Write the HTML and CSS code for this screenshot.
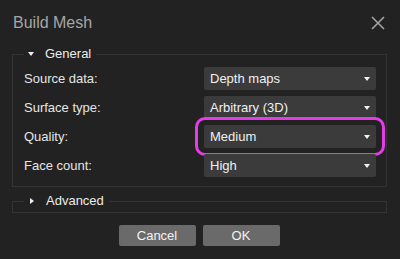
FILE: index.html
```html
<!DOCTYPE html>
<html lang="en">
<head>
    <meta charset="UTF-8">
    <meta name="viewport" content="width=device-width, initial-scale=1.0">
    <title>Build Mesh</title>
    <link rel="stylesheet" href="styles.css">
</head>
<body>
    <div class="dialog">
        <div class="title-bar">
            <span class="title">Build Mesh</span>
            <svg class="close" width="14" height="14" viewBox="0 0 14 14">
                <path d="M1 1 L13 13 M13 1 L1 13" stroke="#a3a3a3" stroke-width="1.6" fill="none"/>
            </svg>
        </div>

        <fieldset class="group">
            <legend><span class="tri-down"></span>General</legend>
            <div class="rows">
                <label>Source data:</label>
                <div class="select"><span>Depth maps</span><span class="arrow"></span></div>

                <label>Surface type:</label>
                <div class="select"><span>Arbitrary (3D)</span><span class="arrow"></span></div>

                <label>Quality:</label>
                <div class="select highlight"><span>Medium</span><span class="arrow"></span></div>

                <label>Face count:</label>
                <div class="select"><span>High</span><span class="arrow"></span></div>
            </div>
        </fieldset>

        <fieldset class="group collapsed">
            <legend><span class="tri-right"></span>Advanced</legend>
        </fieldset>

        <div class="buttons">
            <button type="button">Cancel</button>
            <button type="button">OK</button>
        </div>
    </div>
</body>
</html>
```

FILE: styles.css
```css
body { margin: 0; background: #222222; font-family: "Liberation Sans", Arial, sans-serif; color: #e6e6e6; }
.dialog { width: 400px; height: 259px; box-sizing: border-box; padding: 0 13px 0 12px; }
.title-bar { display: flex; justify-content: space-between; align-items: center; height: 46px; padding-left: 1px; padding-right: 2px; }
.title { font-size: 16px; color: #a6a6a6; }
.group { margin: 0; border: 1px solid #343434; padding: 5px 10px 9px 11px; }
.group legend { font-size: 13px; padding: 0 5px 0 4px; margin-left: 0; display: flex; align-items: center; line-height: 16px; color: #ececec; }
.tri-down { width: 0; height: 0; border-left: 3.5px solid transparent; border-right: 3.5px solid transparent; border-top: 4px solid #f0f0f0; margin-right: 11px; }
.tri-right { width: 0; height: 0; border-top: 3.5px solid transparent; border-bottom: 3.5px solid transparent; border-left: 4px solid #f0f0f0; margin-left: 2px; margin-right: 12px; }
.rows { display: grid; grid-template-columns: 1fr 172px; row-gap: 6px; align-items: center; }
.rows label { font-size: 13px; }
.select { position: relative; height: 23px; background: #3b3b3b; border-radius: 2px; display: flex; align-items: center; justify-content: space-between; padding: 0 6px; font-size: 13px; color: #f0f0f0; box-sizing: border-box; }
.arrow { width: 0; height: 0; border-left: 3.5px solid transparent; border-right: 3.5px solid transparent; border-top: 4px solid #f2f2f2; }
.highlight::after { content: ""; position: absolute; left: -9px; right: -9px; top: -8px; bottom: -8px; border: 3px solid #e33de6; border-radius: 10px; }
.collapsed { margin-top: 6px; padding: 0 10px 3px 11px; }
.buttons { display: flex; justify-content: center; gap: 7px; margin-top: 12px; padding-right: 1px; }
.buttons button { width: 77px; height: 21px; border: none; border-radius: 2px; background: #6a6a6a; color: #f4f4f4; font-family: "Liberation Sans", Arial, sans-serif; font-size: 13px; padding: 0; }
```
